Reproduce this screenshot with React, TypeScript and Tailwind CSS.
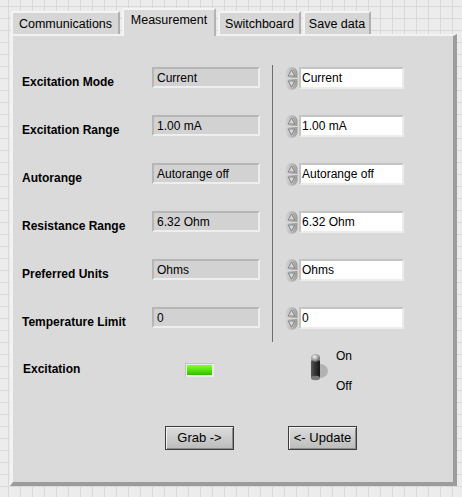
import React from "react";

const rows = [
  { label: "Excitation Mode", value: "Current" },
  { label: "Excitation Range", value: "1.00 mA" },
  { label: "Autorange", value: "Autorange off" },
  { label: "Resistance Range", value: "6.32 Ohm" },
  { label: "Preferred Units", value: "Ohms" },
  { label: "Temperature Limit", value: "0" },
];

function Spinner() {
  return (
    <svg width="13" height="23" viewBox="0 0 13 23" className="shrink-0">
      <defs>
        <linearGradient id="sp" x1="0" y1="0" x2="1" y2="0">
          <stop offset="0" stopColor="#d4d4d4" />
          <stop offset="0.5" stopColor="#bdbdbd" />
          <stop offset="1" stopColor="#9a9a9a" />
        </linearGradient>
      </defs>
      <path d="M0.5 11 V6 a6 6 0 0 1 12 0 V11 Z" fill="url(#sp)" />
      <path d="M0.5 12 V17 a6 6 0 0 0 12 0 V12 Z" fill="url(#sp)" />
      <path d="M6.5 3 L9.8 9 H3.2 Z" fill="#d8d8d8" stroke="#7c7c7c" strokeWidth="0.9" />
      <path d="M6.5 20 L9.8 14 H3.2 Z" fill="#d8d8d8" stroke="#7c7c7c" strokeWidth="0.9" />
    </svg>
  );
}

function Toggle() {
  return (
    <svg width="24" height="32" viewBox="0 0 24 32">
      <defs>
        <linearGradient id="lev" x1="0" y1="0" x2="1" y2="0">
          <stop offset="0" stopColor="#5a5a5a" />
          <stop offset="0.35" stopColor="#3a3a3a" />
          <stop offset="1" stopColor="#151515" />
        </linearGradient>
        <radialGradient id="ball" cx="0.4" cy="0.35" r="0.7">
          <stop offset="0" stopColor="#f4f4f4" />
          <stop offset="0.6" stopColor="#9a9a9a" />
          <stop offset="1" stopColor="#4a4a4a" />
        </radialGradient>
      </defs>
      <ellipse cx="12" cy="19" rx="8" ry="7" fill="#a8a8a8" opacity="0.8" />
      <rect x="3" y="7" width="9" height="20" rx="3" fill="url(#lev)" />
      <ellipse cx="7.5" cy="26" rx="4.5" ry="2.2" fill="#7a7a7a" />
      <ellipse cx="7.5" cy="6" rx="4.5" ry="4" fill="url(#ball)" />
    </svg>
  );
}

function Tab({ label, active = false, w }: { label: string; active?: boolean; w: string }) {
  if (active) {
    return (
      <div
        className={`${w} relative z-10 -mb-[2px] h-[28px] rounded-tl-[3px] border-l-2 border-t-2 border-r-2 border-l-[#f4f4f4] border-t-[#f4f4f4] border-r-[#b4b4b4] bg-[#dadada] pt-[1px] text-center text-[12.5px] text-black`}
      >
        {label}
      </div>
    );
  }
  return (
    <div
      className={`${w} h-[23px] rounded-tl-[3px] border-l-2 border-t-2 border-r-2 border-l-[#f4f4f4] border-t-[#f4f4f4] border-r-[#b0b0b0] bg-[#d6d6d6] pt-[2px] text-center text-[12.5px] text-black`}
    >
      {label}
    </div>
  );
}

function Button({ children }: { children: React.ReactNode }) {
  return (
    <div className="flex h-[24px] w-[69px] items-center justify-center border border-[#3c3c3c] bg-[linear-gradient(to_bottom,#dcdcdc,#bcbcbc)] text-[13px] text-black shadow-[inset_1px_1px_0_#f2f2f2,inset_-1px_-1px_0_#8c8c8c]">
      {children}
    </div>
  );
}

export default function App() {
  return (
    <div
      className="h-[497px] w-[462px] overflow-hidden bg-[#ececec] bg-[linear-gradient(to_right,#d9d9d9_1px,transparent_1px),linear-gradient(to_bottom,#d9d9d9_1px,transparent_1px)] bg-[length:12px_12px] bg-[position:8px_6px] pt-[8px] pl-[10px]"
      style={{ fontFamily: '"Liberation Sans", Arial, sans-serif' }}
    >
      <div className="flex items-end pl-[1px]">
        <Tab label="Communications" w="w-[109px]" />
        <div className="w-[2px]" />
        <Tab label="Measurement" w="w-[94px]" active />
        <div className="w-[2px]" />
        <Tab label="Switchboard" w="w-[83px]" />
        <div className="w-[2px]" />
        <Tab label="Save data" w="w-[68px]" />
      </div>

      <div className="h-[452px] w-[447px] border-l-[3px] border-t-[2px] border-r-[4px] border-b-[4px] border-l-[#f2f2f2] border-t-[#f2f2f2] border-r-[#9c9c9c] border-b-[#9c9c9c] bg-[#dadada] pt-[29px] pl-[9px]">
        <div className="flex">
          <div className="flex flex-col">
            {rows.map((r) => (
              <div key={r.label} className="flex h-[48px] items-start">
                <div className="w-[130px] pt-[8px] text-[12px] font-bold text-black">{r.label}</div>
                <div className="mt-[2px] flex h-[21px] w-[108px] items-center border-2 border-t-[#b6b6b6] border-l-[#b6b6b6] border-r-[#eeeeee] border-b-[#eeeeee] bg-[#d2d2d2] pl-[3px] text-[12px] text-black">
                  {r.value}
                </div>
              </div>
            ))}
          </div>
          <div className="ml-[12px] h-[277px] w-px bg-[#6e6e6e]" />
          <div className="ml-[12px] flex flex-col">
            {rows.map((r) => (
              <div key={r.label} className="flex h-[48px] items-start pt-[2px]">
                <Spinner />
                <div className="ml-[1px] flex h-[22px] w-[105px] items-center border-2 border-t-[#c4c4c4] border-l-[#c4c4c4] border-r-[#ececec] border-b-[#ececec] bg-white pl-[1px] text-[12px] text-black">
                  {r.value}
                </div>
              </div>
            ))}
          </div>
        </div>

        <div className="flex h-[40px] items-start">
          <div className="w-[163px] pl-[1px] pt-[7px] text-[12px] font-bold text-black">Excitation</div>
          <div className="mt-[10px] flex h-[14px] w-[29px] items-center justify-center bg-[#ebebeb] shadow-[inset_1px_1px_0_#c4c4c4]">
            <div className="h-[10px] w-[25px] bg-[linear-gradient(to_bottom,#7dff3a,#4fe000_60%,#36b800)]" />
          </div>
          <div className="ml-[94px] -mt-[1px]">
            <Toggle />
          </div>
          <div className="-mt-[4px] ml-[4px] flex flex-col text-[12px] text-black">
            <span className="leading-[14px]">On</span>
            <span className="mt-[16px] leading-[14px]">Off</span>
          </div>
        </div>

        <div className="mt-[33px] flex pl-[143px]">
          <Button>Grab -&gt;</Button>
          <div className="w-[54px]" />
          <Button>&lt;- Update</Button>
        </div>
      </div>
    </div>
  );
}
